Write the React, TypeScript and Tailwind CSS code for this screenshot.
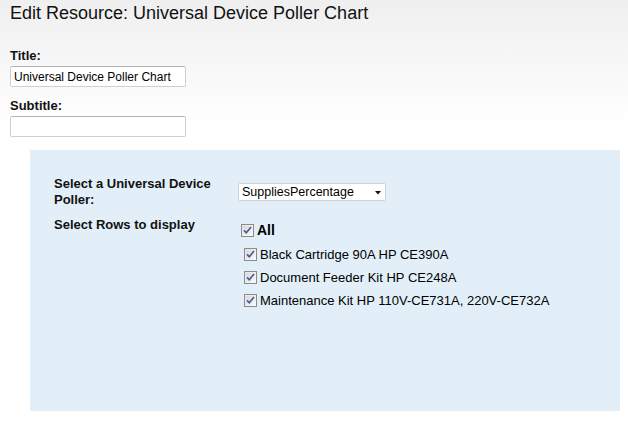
import React from "react";

const rows = [
  "Black Cartridge 90A HP CE390A",
  "Document Feeder Kit HP CE248A",
  "Maintenance Kit HP 110V-CE731A, 220V-CE732A",
];

function CheckBox() {
  return (
    <svg width="13" height="13" viewBox="0 0 13 13" className="shrink-0">
      <defs>
        <linearGradient id="cbfill" x1="0" y1="0" x2="1" y2="1">
          <stop offset="0" stopColor="#d6d6d6" />
          <stop offset="1" stopColor="#fbfbfb" />
        </linearGradient>
      </defs>
      <rect x="0.5" y="0.5" width="12" height="12" fill="#f4f4f4" stroke="#8b8b8b" />
      <rect x="1.5" y="1.5" width="10" height="10" fill="url(#cbfill)" />
      <path d="M3 6.3 L5.3 8.8 L10 3" fill="none" stroke="#4a5d9c" strokeWidth="1.7" />
    </svg>
  );
}

function TextBox({ value }: { value?: string }) {
  return (
    <div className="mt-[3px] flex h-[21px] w-[176px] items-center rounded-[2px] border border-[#cfcfcf] border-t-[#b5b5b5] bg-white pl-[3px] text-[12px] text-black">
      {value}
    </div>
  );
}

export default function App() {
  return (
    <div className="min-h-[421px] w-full bg-[linear-gradient(to_bottom,#efefef_0px,#ffffff_125px)] font-['Liberation_Sans',Arial,sans-serif] text-[#111]">
      <div className="pl-[10px] pt-[3px]">
        <h1 className="text-[18px] leading-[21px] text-[#111]">
          Edit Resource: Universal Device Poller Chart
        </h1>

        {/* Title / Subtitle */}
        <div className="mt-[24px]">
          <div className="text-[13px] font-bold leading-[15px]">Title:</div>
          <TextBox value="Universal Device Poller Chart" />
        </div>
        <div className="mt-[11px]">
          <div className="text-[13px] font-bold leading-[15px]">Subtitle:</div>
          <TextBox />
        </div>
      </div>

      {/* Options panel */}
      <div className="ml-[30px] mt-[13px] h-[261px] w-[590px] bg-[#e2eff8] pl-[24px] pt-[26px]">
        <div className="grid grid-cols-[184px_auto] gap-y-[9px] text-[13px]">
          <div className="font-bold leading-[16px]">
            Select a Universal Device Poller:
          </div>
          <div className="flex items-center">
            <div className="relative flex h-[18px] w-[148px] items-center rounded-[2px] border border-[#d2d2d2] bg-white pl-[3px] text-[12.5px] text-black">
              SuppliesPercentage
              <svg width="6" height="4" viewBox="0 0 6 4" className="absolute left-[136px] top-[7px]">
                <path d="M0 0 L6 0 L3 3.5 Z" fill="#111" />
              </svg>
            </div>
          </div>

          <div className="font-bold leading-[16px]">Select Rows to display</div>
          <div className="mt-[5px]">
            <div className="flex h-[16px] items-center gap-[3px] pl-[3px]">
              <CheckBox />
              <span className="text-[14px] font-bold text-black">All</span>
            </div>
            <div className="mt-[5px]">
              {rows.map((r) => (
                <div key={r} className="flex h-[23px] items-center gap-[3px] pl-[6px] text-black">
                  <CheckBox />
                  <span>{r}</span>
                </div>
              ))}
            </div>
          </div>
        </div>
      </div>
    </div>
  );
}
